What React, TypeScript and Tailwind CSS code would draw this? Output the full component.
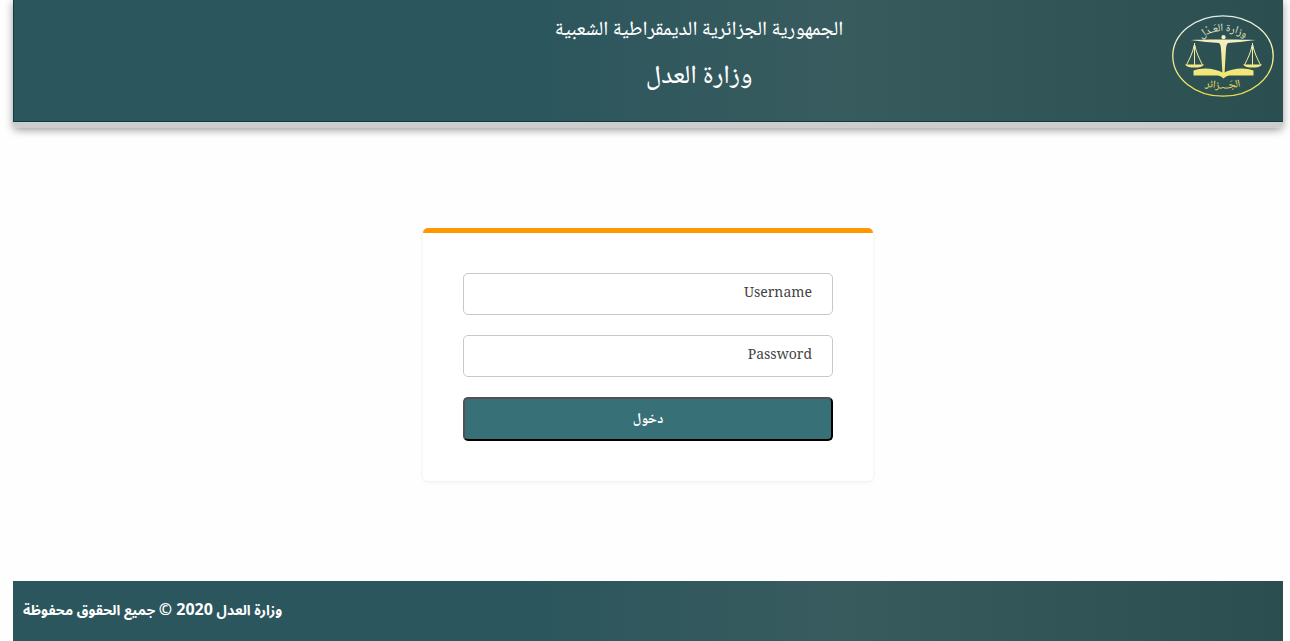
import type { FormEvent } from "react";

function Emblem() {
  return (
    <svg viewBox="0 0 102 82" className="h-[82px] w-[102px] shrink-0" role="img" aria-label="وزارة العدل - الجزائر">
      <defs>
        <linearGradient id="gold" gradientUnits="userSpaceOnUse" x1="0" y1="0" x2="0" y2="82">
          <stop offset="0" stopColor="#dfeceb" />
          <stop offset="0.3" stopColor="#f3efc4" />
          <stop offset="0.65" stopColor="#f3e882" />
          <stop offset="1" stopColor="#efe041" />
        </linearGradient>
        <path id="upper" d="M20 30 Q51 2 82 30" />
        <path id="lower" d="M20 67 Q51 80 82 67" />
      </defs>
      <ellipse cx="51" cy="41" rx="50.2" ry="40.2" fill="none" stroke="url(#gold)" strokeWidth="1.3" />
      <g fill="url(#gold)" stroke="none">
        <circle cx="51.5" cy="22.2" r="2.1" />
        <path d="M18.500 25 C28 24.600 40 24.400 49 24.500 H54 C63 24.400 74 24.600 83.500 25 C73 26.500 62 27.600 56 28 C54.300 29 54.100 32 53.800 37 L52.600 58 H50.400 L49.200 37 C48.900 32 48.700 29 47 28 C40 27.600 29 26.500 18.500 25Z" />
        <path d="M21.500 55.500 C30 52 43 53 51.500 58 C60 53 73 52 81.500 55.500 V60.500 H60 C56 60.500 54 61 51.500 63.500 C49 61 47 60.500 43 60.500 H21.500Z" />
      </g>
      <g fill="none" stroke="url(#gold)" strokeWidth="1">
        <path d="M22.500 28 V50 M22.200 30 C21 37 18 43 14.500 50 M22.800 30 C24 37 27 43 30.500 50" />
        <path d="M80.500 28 V50 M80.200 30 C79 37 76 43 72.500 50 M80.800 30 C82 37 85 43 88.500 50" />
      </g>
      <g fill="url(#gold)">
        <path d="M13 49.500 H32 C30.500 52 27 52.500 22.500 52.500 C18 52.500 14.500 52 13 49.500Z" />
        <path d="M71 49.500 H90 C88.500 52 85 52.500 80.500 52.500 C76 52.500 72.500 52 71 49.500Z" />
        <g className="font-['Noto_Naskh_Arabic','DejaVu_Sans',sans-serif] text-[11px]" textAnchor="middle">
          <text>
            <textPath href="#upper" startOffset="50%">
              وزارة العَـدْل
            </textPath>
          </text>
          <text>
            <textPath href="#lower" startOffset="50%">
              الجَــــزائر
            </textPath>
          </text>
        </g>
      </g>
    </svg>
  );
}

const fieldClass =
  "block h-[42px] w-full rounded-[5px] border border-[#c8c8c8] bg-white px-5 pb-1.5 text-right font-['Noto_Serif','Droid_Serif','DejaVu_Serif_Condensed',serif] text-sm text-[#444] outline-none placeholder:text-[#444] placeholder:opacity-100 focus:border-[#387077]";

export default function App() {
  const submit = (e: FormEvent) => e.preventDefault();
  return (
    <div
      dir="rtl"
      className="flex min-h-screen flex-col bg-[#fefefe] pl-[13px] pr-[7px] font-['Open_Sans','Noto_Naskh_Arabic','Noto_Sans_Arabic',sans-serif]"
    >
      <header className="rounded-b-[5px] border-b-6 border-[#cdcdcd] shadow-[0_2px_8px_rgba(0,0,0,0.4)]">
        <div className="flex h-[122px] items-start border-b border-l border-[#0c3b46] bg-linear-to-r from-[#2b565d] from-40% via-[#385b5e] via-65% to-[#2b4e50] pl-[212px] pr-[9px] pt-[15px]">
          <Emblem />
          <div className="grow text-center font-['Noto_Naskh_Arabic','DejaVu_Sans_Condensed',sans-serif] text-white">
            <h1 className="text-xl font-medium leading-8">الجمهورية الجزائرية الديمقراطية الشعبية</h1>
            <h2 className="mt-3 text-[26px] font-medium leading-9">وزارة العدل</h2>
          </div>
        </div>
      </header>

      <main className="flex grow items-center justify-center py-10">
        <form
          onSubmit={submit}
          className="flex w-[450px] max-w-full flex-col gap-5 rounded-[5px] border-t-5 border-[#ff9900] bg-white p-10 shadow-[0_1px_4px_rgba(0,0,0,0.07)]"
        >
          <input aria-label="Username" placeholder="Username" type="text" className={fieldClass} />
          <input aria-label="Password" placeholder="Password" type="password" className={fieldClass} />
          <button
            type="submit"
            className="h-11 w-full rounded-[5px] border-2 border-b-black border-l-[#554f4f] border-r-black border-t-[#554f4f] bg-[#387077] pb-0.5 text-sm font-bold text-white"
          >
            دخول
          </button>
        </form>
      </main>

      <footer className="flex h-[60px] items-center justify-end bg-linear-to-r from-[#2b565d] from-40% via-[#385b5e] via-65% to-[#2b4e50] px-[10px] pb-1 font-['Open_Sans','Noto_Sans_Arabic',sans-serif] text-sm font-bold text-white">
        <p>
          وزارة العدل <span className="text-base">2020 ©</span> جميع الحقوق محفوظة
        </p>
      </footer>
    </div>
  );
}
